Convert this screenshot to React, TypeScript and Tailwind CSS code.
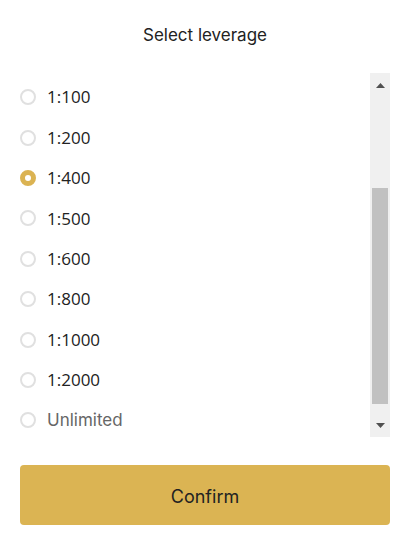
import { useState } from "react";

const options = ["1:100", "1:200", "1:400", "1:500", "1:600", "1:800", "1:1000", "1:2000", "Unlimited"];

export default function App() {
  const [selected, setSelected] = useState("1:400");

  return (
    <div className="w-[410px] h-[556px] bg-white px-5 font-['Inter','Liberation_Sans',sans-serif] text-[#222]">
      <div className="h-[72px] flex items-center justify-center text-[17px]">Select leverage</div>

      <div className="mt-[1px] h-[364px] flex">
        <div className="flex-1 pt-[4px] overflow-hidden">
          {options.map((opt) => {
            const active = opt === selected;
            return (
              <div
                key={opt}
                onClick={() => setSelected(opt)}
                className="h-[40.4px] flex items-center gap-[11px] cursor-pointer"
              >
                {active ? (
                  <span className="w-4 h-4 rounded-full border-[5px] border-[#dbb352] bg-white" />
                ) : (
                  <span className="w-4 h-4 rounded-full border-2 border-[#e0e0e0] bg-white" />
                )}
                <span
                  className={
                    opt === "Unlimited"
                      ? "text-[17px] text-[#666] font-['Inter','Liberation_Sans',sans-serif]"
                      : "text-[17px] font-['Open_Sans','Liberation_Sans',sans-serif]"
                  }
                >
                  {opt}
                </span>
              </div>
            );
          })}
        </div>

        {/* scrollbar */}
        <div className="w-[20px] bg-[#f0f0f0] flex flex-col items-center">
          <div className="h-[24px] flex items-center justify-center">
            <svg width="9" height="5" viewBox="0 0 9 5">
              <path d="M0 5 L4.5 0 L9 5 Z" fill="#505050" />
            </svg>
          </div>
          <div className="w-full flex-1 flex flex-col px-[2px]">
            <div className="h-[91px]" />
            <div className="h-[216px] bg-[#c1c1c1]" />
          </div>
          <div className="h-[24px] flex items-center justify-center">
            <svg width="9" height="5" viewBox="0 0 9 5">
              <path d="M0 0 L9 0 L4.5 5 Z" fill="#505050" />
            </svg>
          </div>
        </div>
      </div>

      <button className="mt-[28px] w-full h-[60px] pt-[3px] rounded-[4px] bg-[#dbb453] text-[18px] text-[#222]">
        Confirm
      </button>
    </div>
  );
}
